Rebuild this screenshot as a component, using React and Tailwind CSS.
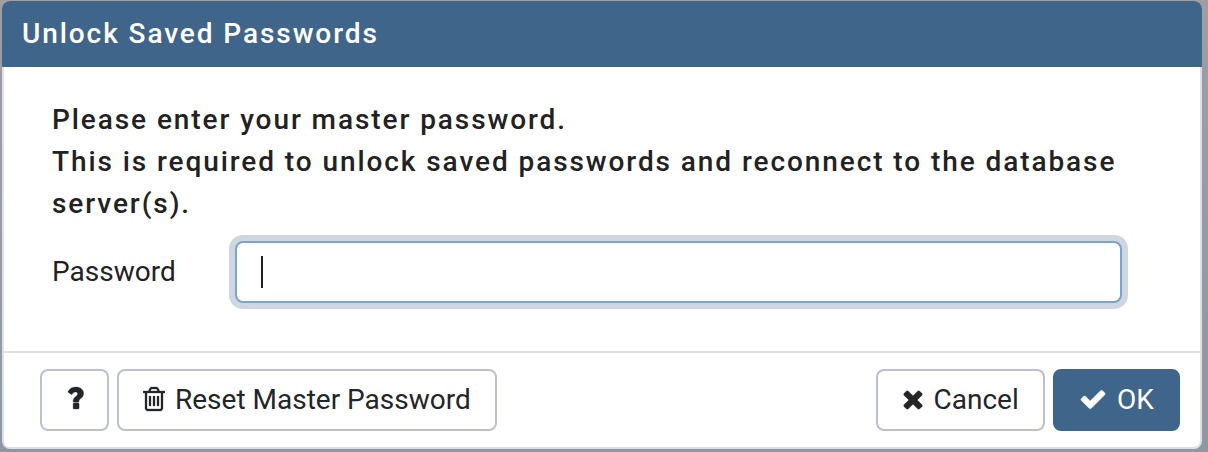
import React from 'react';

const ICONS = {
  question: {
    box: '-1.8 -2 18 28',
    path: 'M.2 4.4Q2.9 0 8.1 0C12.6 0 15.8 2.6 15.8 6.5C15.8 11.2 11.2 11.4 11.2 14.3Q11.2 15.2 10.4 15.2H6.1Q5.3 15.2 5.3 14.3C5.3 9.7 9.8 9.3 9.8 6.9C9.8 5.7 9 5.1 7.7 5.1C6.2 5.1 5.3 5.9 4.3 7.2Q3.8 7.8 3.2 7.3L.5 5.4Q0 5 .2 4.4zM6.2 15.9H10.4Q11.3 15.9 11.3 16.8V21.1Q11.3 22 10.4 22H6.2Q5.3 22 5.3 21.1V16.8Q5.3 15.9 6.2 15.9z',
  },
  trash: {
    box: '192 0 1408 1792',
    path: 'M704 736v576q0 14-9 23t-23 9h-64q-14 0-23-9t-9-23v-576q0-14 9-23t23-9h64q14 0 23 9t9 23zm256 0v576q0 14-9 23t-23 9h-64q-14 0-23-9t-9-23v-576q0-14 9-23t23-9h64q14 0 23 9t9 23zm256 0v576q0 14-9 23t-23 9h-64q-14 0-23-9t-9-23v-576q0-14 9-23t23-9h64q14 0 23 9t9 23zm128 724v-948h-896v948q0 22 7 40.5t14.5 27 10.5 8.5h832q3 0 10.5-8.5t14.5-27 7-40.5zm-672-1076h448l-48-117q-7-9-17-11h-317q-10 2-17 11zm928 32v64q0 14-9 23t-23 9h-96v948q0 83-47 143.5t-113 60.5h-832q-66 0-113-58.5t-47-141.5v-952h-96q-14 0-23-9t-9-23v-64q0-14 9-23t23-9h309l70-167q15-37 54-63t79-26h320q40 0 79 26t54 63l70 167h309q14 0 23 9t9 23z',
  },
  times: {
    box: '192 0 1408 1792',
    path: 'M1490 1322q0 40-28 68l-136 136q-28 28-68 28t-68-28l-294-294-294 294q-28 28-68 28t-68-28l-136-136q-28-28-28-68t28-68l294-294-294-294q-28-28-28-68t28-68l136-136q28-28 68-28t68 28l294 294 294-294q28-28 68-28t68 28l136 136q28 28 28 68t-28 68l-294 294 294 294q28 28 28 68z',
  },
  check: {
    box: '0 0 1792 1792',
    path: 'M1671 566q0 40-28 68l-724 724-136 136q-28 28-68 28t-68-28l-136-136-362-362q-28-28-28-68t28-68l136-136q28-28 68-28t68 28l294 295 656-657q28-28 68-28t68 28l136 136q28 28 28 68z',
  },
};

function Icon({ name }) {
  return (
    <svg
      className="mb-0.5 h-7 w-auto shrink-0 stroke-current stroke-[0.3px]"
      viewBox={ICONS[name].box}
      fill="currentColor"
      aria-hidden="true"
    >
      <path d={ICONS[name].path} vectorEffect="non-scaling-stroke" />
    </svg>
  );
}

function Button({ icon, children, className, ...props }) {
  return (
    <button
      type="button"
      className={`flex h-[62px] items-center rounded-lg border-2 whitespace-nowrap ${className}`}
      {...props}
    >
      <Icon name={icon} />
      {children}
    </button>
  );
}

export default function App() {
  return (
    <div className="h-[452px] w-[1208px] bg-linear-to-b from-[#9e9ea4] to-[#8f97a2] pt-px pl-0.5 font-['Roboto',sans-serif] text-[28px] leading-[42px] text-[#222222]">
      <div className="flex h-[448px] w-[1200px] flex-col overflow-hidden rounded-lg bg-[#dee0e6]">
        <header className="flex h-[66px] shrink-0 items-center bg-[#40658b] px-5 font-medium tracking-[1.92px] text-white">
          <h1>Unlock Saved Passwords</h1>
        </header>

        <div className="mx-0.5 mb-0.5 flex flex-1 flex-col rounded-b-md bg-white">
          {/* Message and password field */}
          <div className="h-[284px] pt-8 pr-10 pl-12">
            <p className="font-medium tracking-[1.92px]">
              Please enter your master password.
              <br />
              This is required to unlock saved passwords and reconnect to the database server(s).
            </p>
            <div className="mt-4 flex h-[62px] items-center">
              <label htmlFor="password" className="w-[183px] shrink-0">Password</label>
              <div
                id="password"
                role="textbox"
                className="flex h-[62px] w-[887px] shrink-0 items-center rounded-lg border-2 border-[#7ba5cd] bg-white px-6 ring-6 ring-[#ced6e2]"
              >
                <span className="h-8 w-0.5 bg-[#222222]" />
              </div>
            </div>
          </div>

          {/* Actions */}
          <footer className="flex flex-1 justify-between border-t-2 border-[#dee0e6] pt-4 pr-5 pl-9">
            <div className="flex gap-2">
              <Button icon="question" aria-label="Help" className="w-[69px] justify-center border-[#bac1cd] text-[#222529]" />
              <Button icon="trash" className="w-[380px] gap-2.5 border-[#bac1cd] pl-6 text-[#222529]">
                <span>Reset Master Password</span>
              </Button>
            </div>
            <div className="flex gap-2">
              <Button icon="times" className="w-[169px] gap-2.5 border-[#bac1cd] pl-[23.5px] text-[#222529]">
                <span>Cancel</span>
              </Button>
              <Button icon="check" className="w-[127px] gap-2.5 border-[#40658b] bg-[#40658b] pl-6 text-white">
                <span>OK</span>
              </Button>
            </div>
          </footer>
        </div>
      </div>
    </div>
  );
}
